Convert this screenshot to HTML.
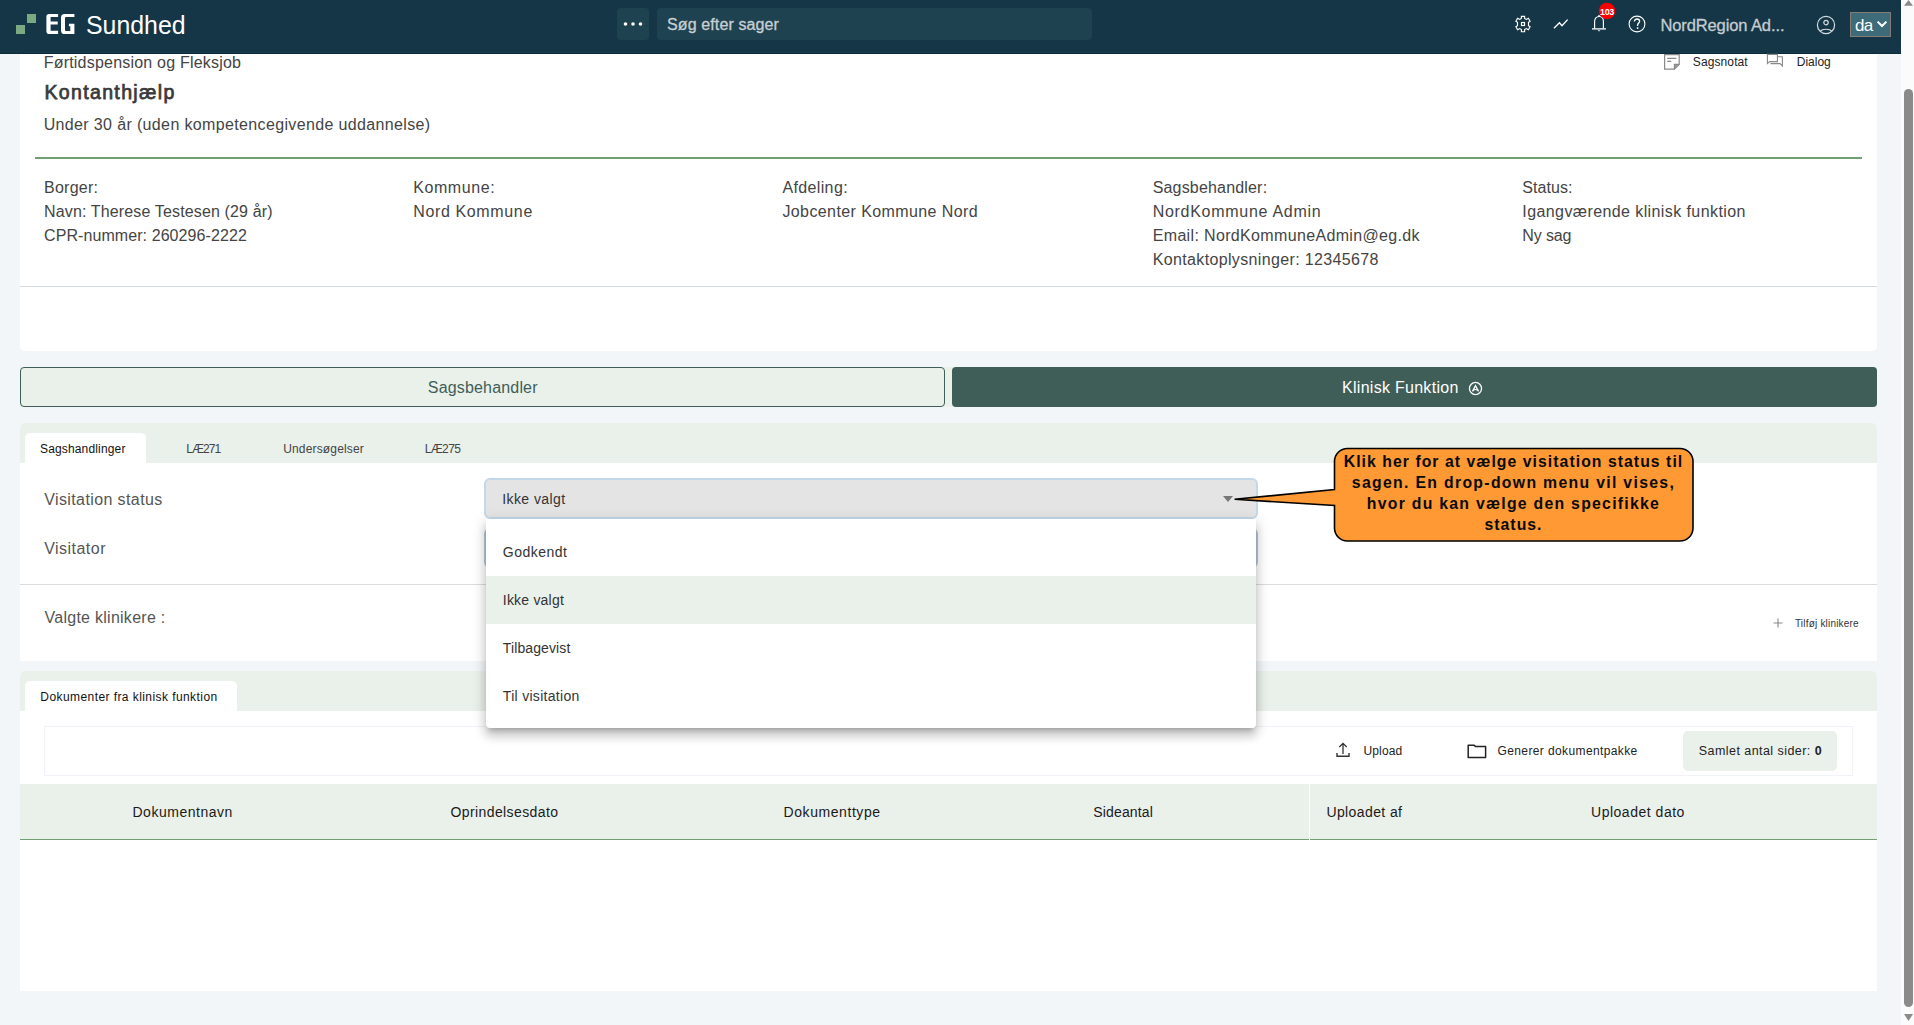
<!DOCTYPE html>
<html lang="da">
<head>
<meta charset="utf-8">
<title>EG Sundhed</title>
<style>
html,body{margin:0;padding:0;}
body{width:1914px;height:1025px;overflow:hidden;position:relative;background:#f2f6f9;font-family:"Liberation Sans",sans-serif;}
.a{position:absolute;box-sizing:border-box;}
.t{position:absolute;white-space:pre;line-height:1;font-family:"Liberation Sans",sans-serif;}
svg{position:absolute;overflow:visible;}
</style>
</head>
<body>
<!-- page cards -->
<div class="a" style="left:20px;top:0;width:1857px;height:351px;background:#fff;border-radius:0 0 5px 5px;"></div>
<div class="a" style="left:35px;top:157px;width:1827px;height:2px;background:#6f9f72;"></div>
<div class="a" style="left:20px;top:286px;width:1857px;height:1px;background:#d5dadf;"></div>

<!-- buttons -->
<div class="a" style="left:20px;top:367px;width:1857px;height:40px;background:#eaf0ea;"></div>
<div class="a" style="left:20px;top:367px;width:925px;height:40px;border:1px solid #3f5e58;border-radius:4px;background:#eaf0ea;"></div>
<div class="a" style="left:952px;top:367px;width:925px;height:40px;border-radius:4px;background:#3f5e58;"></div>
<svg style="left:1468px;top:381px" width="15" height="15" viewBox="0 0 15 15"><circle cx="7.5" cy="7.5" r="6.05" fill="none" stroke="#fff" stroke-width="1.3"/><path d="M4.5 10.4 L7.5 4.6 L10.5 10.4" fill="none" stroke="#fff" stroke-width="1.3"/><path d="M5.3 9.3 Q7.5 7.7 9.7 9.3" fill="none" stroke="#fff" stroke-width="1.2"/></svg>

<!-- panel 1 -->
<div class="a" style="left:20px;top:423px;width:1857px;height:238px;background:#fff;border-radius:5px 5px 0 0;overflow:hidden;">
  <div class="a" style="left:0;top:0;width:1857px;height:40px;background:#eaf0ea;"></div>
  <div class="a" style="left:5px;top:10px;width:121px;height:30px;background:#fff;border-radius:5px 5px 0 0;"></div>
</div>
<!-- select -->
<div class="a" style="left:484px;top:478px;width:774px;height:41px;background:#e4e4e4;border:2px solid #c4d8e8;border-radius:6px;"></div>
<svg style="left:1223px;top:496px" width="10" height="6" viewBox="0 0 10 6"><path d="M0 0 H10 L5 6 Z" fill="#777"/></svg>
<div class="a" style="left:484px;top:528px;width:774px;height:40px;background:#fff;border:2px solid #b4c9da;border-radius:6px;"></div>
<div class="a" style="left:20px;top:584px;width:1857px;height:1px;background:#dcdcdc;"></div>
<svg style="left:1773px;top:618px" width="10" height="10" viewBox="0 0 10 10"><path d="M5 0.5 V9.5 M0.5 5 H9.5" stroke="#888" stroke-width="1.1" fill="none"/></svg>

<!-- panel 2 -->
<div class="a" style="left:20px;top:671px;width:1857px;height:320px;background:#fff;border-radius:5px 5px 0 0;overflow:hidden;">
  <div class="a" style="left:0;top:0;width:1857px;height:40px;background:#eaf0ea;"></div>
  <div class="a" style="left:5px;top:10px;width:212px;height:30px;background:#fff;border-radius:5px 5px 0 0;"></div>
</div>
<div class="a" style="left:44px;top:726px;width:1809px;height:50px;border:1px solid #f0f2f7;"></div>
<div class="a" style="left:1683px;top:731px;width:154px;height:40px;background:#eaf0ea;border-radius:5px;"></div>
<svg style="left:1336px;top:742px" width="14" height="16" viewBox="0 0 14 16"><path d="M7 1.5 V12 M3.3 5 L7 1.3 L10.7 5" stroke="#333" stroke-width="1.3" fill="none"/><path d="M1 11 V14.2 H13 V11" stroke="#333" stroke-width="1.4" fill="none"/></svg>
<svg style="left:1467px;top:743px" width="20" height="16" viewBox="0 0 20 16"><path d="M1.2 2.2 H7.2 L8.6 3.6 H18.6 V14.6 H1.2 Z" stroke="#222" stroke-width="1.5" fill="none" stroke-linejoin="round"/></svg>
<div class="a" style="left:20px;top:784px;width:1857px;height:56px;background:#eaf0ea;border-bottom:1px solid #6f9f72;"></div>
<div class="a" style="left:1309px;top:784px;width:1.4px;height:56px;background:#fff;"></div>

<!-- header -->
<div class="a" style="left:0;top:0;width:1901px;height:54px;background:#143647;border-bottom:1px solid #0d2c3a;"></div>
<div class="a" style="left:16px;top:25px;width:9px;height:9px;background:#7aa982;"></div>
<div class="a" style="left:27px;top:14px;width:9px;height:9px;background:#7aa982;"></div>
<svg style="left:0;top:0" width="100" height="40" viewBox="0 0 100 40"><path fill="#fff" d="M49.2 13.9 H58.1 V17.1 H50.6 V21.5 H57.7 V24.5 H50.6 V30.8 H58.1 V34 H49.2 Q46.4 34 46.4 31.2 V16.7 Q46.4 13.9 49.2 13.9 Z"/><path fill="#fff" d="M64.6 13.9 H74.4 V16.9 H66 Q65 16.9 65 17.9 V30 Q65 31 66 31 H70.3 V26.3 H68.9 V23.7 H74.4 V34 H64.6 Q61 34 61 30.4 V17.5 Q61 13.9 64.6 13.9 Z"/></svg>
<div class="a" style="left:617px;top:8px;width:32px;height:32px;background:#1f4250;border-radius:4px;"></div>
<svg style="left:617px;top:8px" width="32" height="32" viewBox="0 0 32 32"><circle cx="8.5" cy="16" r="1.8" fill="#fff"/><circle cx="16" cy="16" r="1.8" fill="#fff"/><circle cx="23.5" cy="16" r="1.8" fill="#fff"/></svg>
<div class="a" style="left:657px;top:8px;width:435px;height:32px;background:#1f4250;border-radius:4px;"></div>
<!-- gear -->
<svg style="left:1514px;top:15px" width="18" height="18" viewBox="0 0 18 18"><path d="M7.4 1.3 H10.6 V3.4 L12.3 4.4 L14.4 3.2 L16.1 6.2 L14.5 7.3 V10.7 L16.1 11.8 L14.4 14.8 L12.3 13.6 L10.6 14.6 V16.7 H7.4 V14.6 L5.7 13.6 L3.6 14.8 L1.9 11.8 L3.5 10.7 V7.3 L1.9 6.2 L3.6 3.2 L5.7 4.4 L7.4 3.4 Z" fill="none" stroke="#fff" stroke-width="1.15" stroke-linejoin="miter"/><rect x="7.5" y="7.5" width="3" height="3" fill="none" stroke="#fff" stroke-width="1.2"/></svg>
<!-- trend -->
<svg style="left:1552px;top:17px" width="18" height="14" viewBox="0 0 18 14"><path d="M2 11.2 L7.4 5.8 L10 8.8 L15.6 2.6" fill="none" stroke="#fff" stroke-width="1.35" stroke-linejoin="miter"/></svg>
<!-- bell -->
<svg style="left:1590px;top:14px" width="18" height="20" viewBox="0 0 18 20"><path d="M4.6 14.4 V7.4 C4.6 4.4 6.5 2.5 9 2.5 C11.5 2.5 13.4 4.4 13.4 7.4 V14.4" fill="none" stroke="#fff" stroke-width="1.15"/><path d="M2 14.9 H16" stroke="#fff" stroke-width="1.3"/><circle cx="9" cy="1.9" r="0.9" fill="#fff"/><path d="M7.6 16.2 H10.4 L9 17.6 Z" fill="#fff"/></svg>
<svg style="left:1598px;top:2px" width="18" height="18" viewBox="0 0 18 18"><circle cx="9" cy="9" r="8.2" fill="#f00"/></svg>
<div class="t" style="left:1598px;top:7.6px;width:18px;text-align:center;font-size:9px;font-weight:700;color:#fff;letter-spacing:-0.3px;">103</div>
<!-- help -->
<svg style="left:1627px;top:14px" width="20" height="20" viewBox="0 0 20 20"><circle cx="10" cy="10" r="7.9" fill="none" stroke="#fff" stroke-width="1.1"/><path d="M7.4 7.6 C7.4 5.9 8.6 5 10 5 C11.5 5 12.6 6 12.6 7.3 C12.6 8.9 10.6 9.2 10.6 11.3 V12" fill="none" stroke="#fff" stroke-width="1.3"/><rect x="9.8" y="13.3" width="1.6" height="1.6" fill="#fff"/></svg>
<!-- user -->
<svg style="left:1816px;top:15px" width="20" height="20" viewBox="0 0 20 20"><circle cx="10" cy="10" r="8.6" fill="none" stroke="#d5dcdf" stroke-width="1.2"/><circle cx="10" cy="7.6" r="2.2" fill="none" stroke="#d5dcdf" stroke-width="1.2"/><path d="M4.4 16.2 C6.2 13.6 13.8 13.6 15.6 16.2" fill="none" stroke="#d5dcdf" stroke-width="1.2"/></svg>
<!-- lang -->
<div class="a" style="left:1850px;top:12px;width:41px;height:25px;background:#3d6b7a;border:1px solid #857c77;"></div>
<svg style="left:1876px;top:20px" width="12" height="8" viewBox="0 0 12 8"><path d="M1.6 1.6 L6 6 L10.4 1.6" fill="none" stroke="#fff" stroke-width="2"/></svg>

<!-- sagsnotat / dialog icons -->
<svg style="left:1663px;top:53px" width="18" height="18" viewBox="0 0 18 18"><path d="M1.6 1.6 H16.2 V11.4 L11.4 16.2 H1.6 Z" fill="none" stroke="#888" stroke-width="1.2"/><path d="M11.4 16.2 V11.4 H16.2" fill="#999" stroke="#888" stroke-width="1.2"/><path d="M4.2 5.3 H13.4 M4.2 8.4 H8.2" stroke="#888" stroke-width="1.2"/></svg>
<svg style="left:1766px;top:53px" width="18" height="18" viewBox="0 0 18 18"><path d="M1.4 1.4 H11.4 V8.6 H3.6 L1.4 10.6 Z" fill="none" stroke="#888" stroke-width="1.1"/><path d="M4.4 10.6 H14 L16.4 13 V3.8 H11.4" fill="none" stroke="#888" stroke-width="1.1"/></svg>

<!-- scrollbar -->
<div class="a" style="left:1901px;top:0;width:13px;height:1025px;background:#fbfbfb;"></div>
<svg style="left:1901px;top:0" width="13" height="1025" viewBox="0 0 13 1025"><path d="M3 5.8 L7.5 0 L12 5.8 Z" fill="#8a8a8a"/><rect x="3" y="89" width="9" height="918" rx="4.5" fill="#8a8a8a"/><path d="M3 1014 H12 L7.5 1021 Z" fill="#8a8a8a"/></svg>

<!-- dropdown panel -->
<div class="a" style="left:486px;top:519px;width:770px;height:209px;background:#fff;border-radius:0 0 4px 4px;box-shadow:0 5px 5px -3px rgba(0,0,0,.2),0 8px 10px 1px rgba(0,0,0,.14),0 3px 14px 2px rgba(0,0,0,.12);"></div>
<div class="a" style="left:486px;top:576px;width:770px;height:48px;background:#eaf0ea;"></div>

<!-- callout -->
<svg style="left:0;top:0" width="1914" height="1025" viewBox="0 0 1914 1025"><path d="M1347.5 448.5 H1680 A13 13 0 0 1 1693 461.5 V528 A13 13 0 0 1 1680 541 H1347.5 A13 13 0 0 1 1334.5 528 V505.5 L1234.6 499.3 L1334.5 489.5 V461.5 A13 13 0 0 1 1347.5 448.5 Z" fill="#ff9933" stroke="#000" stroke-width="1.6" stroke-linejoin="miter"/></svg>

<div id='t0' class='t' style='left:86.00px;top:11.89px;font-size:26px;font-weight:400;color:#fff;letter-spacing:0.000px;transform:scaleX(0.9567);transform-origin:0 0;'><span>Sundhed</span></div>
<div id='t1' class='t' style='left:667.10px;top:16.66px;font-size:16px;font-weight:400;color:#c8d0d4;letter-spacing:0.108px;-webkit-text-stroke:0.3px #c8d0d4;'><span>Søg efter sager</span></div>
<div id='t2' class='t' style='left:1660.40px;top:16.83px;font-size:16.5px;font-weight:400;color:#c5cdd1;letter-spacing:-0.105px;-webkit-text-stroke:0.3px #c5cdd1;'><span>NordRegion Ad...</span></div>
<div id='t3' class='t' style='left:1855.10px;top:16.51px;font-size:17px;font-weight:400;color:#fff;letter-spacing:-0.922px;'><span>da</span></div>
<div id='t4' class='t' style='left:43.70px;top:54.66px;font-size:16px;font-weight:400;color:#444;letter-spacing:0.208px;'><span>Førtidspension og Fleksjob</span></div>
<div id='t5' class='t' style='left:44.40px;top:83.39px;font-size:19.5px;font-weight:400;color:#3a3a3a;letter-spacing:1.362px;-webkit-text-stroke:0.75px #3a3a3a;'><span>Kontanthjælp</span></div>
<div id='t6' class='t' style='left:43.70px;top:117.36px;font-size:16px;font-weight:400;color:#444;letter-spacing:0.358px;'><span>Under 30 år (uden kompetencegivende uddannelse)</span></div>
<div id='t7' class='t' style='left:1692.80px;top:55.74px;font-size:12px;font-weight:400;color:#222;letter-spacing:0.107px;'><span>Sagsnotat</span></div>
<div id='t8' class='t' style='left:1796.80px;top:55.74px;font-size:12px;font-weight:400;color:#222;letter-spacing:-0.006px;'><span>Dialog</span></div>
<div id='t9' class='t' style='left:44.00px;top:180.16px;font-size:16px;font-weight:400;color:#444;letter-spacing:0.255px;'><span>Borger:</span></div>
<div id='t10' class='t' style='left:44.00px;top:204.16px;font-size:16px;font-weight:400;color:#444;letter-spacing:0.144px;'><span>Navn: Therese Testesen (29 år)</span></div>
<div id='t11' class='t' style='left:44.00px;top:228.16px;font-size:16px;font-weight:400;color:#444;letter-spacing:0.082px;'><span>CPR-nummer: 260296-2222</span></div>
<div id='t12' class='t' style='left:413.20px;top:180.16px;font-size:16px;font-weight:400;color:#444;letter-spacing:0.589px;'><span>Kommune:</span></div>
<div id='t13' class='t' style='left:413.20px;top:204.16px;font-size:16px;font-weight:400;color:#444;letter-spacing:0.641px;'><span>Nord Kommune</span></div>
<div id='t14' class='t' style='left:782.40px;top:180.16px;font-size:16px;font-weight:400;color:#444;letter-spacing:0.367px;'><span>Afdeling:</span></div>
<div id='t15' class='t' style='left:782.40px;top:204.16px;font-size:16px;font-weight:400;color:#444;letter-spacing:0.406px;'><span>Jobcenter Kommune Nord</span></div>
<div id='t16' class='t' style='left:1152.70px;top:180.16px;font-size:16px;font-weight:400;color:#444;letter-spacing:0.177px;'><span>Sagsbehandler:</span></div>
<div id='t17' class='t' style='left:1152.70px;top:204.16px;font-size:16px;font-weight:400;color:#444;letter-spacing:0.712px;'><span>NordKommune Admin</span></div>
<div id='t18' class='t' style='left:1152.70px;top:228.16px;font-size:16px;font-weight:400;color:#444;letter-spacing:0.345px;'><span>Email: NordKommuneAdmin@eg.dk</span></div>
<div id='t19' class='t' style='left:1152.70px;top:252.16px;font-size:16px;font-weight:400;color:#444;letter-spacing:0.357px;'><span>Kontaktoplysninger: 12345678</span></div>
<div id='t20' class='t' style='left:1522.30px;top:180.16px;font-size:16px;font-weight:400;color:#444;letter-spacing:0.048px;'><span>Status:</span></div>
<div id='t21' class='t' style='left:1522.30px;top:204.16px;font-size:16px;font-weight:400;color:#444;letter-spacing:0.408px;'><span>Igangværende klinisk funktion</span></div>
<div id='t22' class='t' style='left:1522.30px;top:228.16px;font-size:16px;font-weight:400;color:#444;letter-spacing:-0.139px;'><span>Ny sag</span></div>
<div id='t23' class='t' style='left:427.80px;top:380.16px;font-size:16px;font-weight:400;color:#3f5e58;letter-spacing:0.172px;'><span>Sagsbehandler</span></div>
<div id='t24' class='t' style='left:1342.00px;top:380.36px;font-size:16px;font-weight:400;color:#fff;letter-spacing:0.284px;'><span>Klinisk Funktion</span></div>
<div id='t25' class='t' style='left:40.00px;top:443.44px;font-size:12px;font-weight:400;color:#111;letter-spacing:0.153px;'><span>Sagshandlinger</span></div>
<div id='t26' class='t' style='left:186.20px;top:443.44px;font-size:12px;font-weight:400;color:#444;letter-spacing:-0.901px;'><span>LÆ271</span></div>
<div id='t27' class='t' style='left:283.20px;top:443.44px;font-size:12px;font-weight:400;color:#444;letter-spacing:0.158px;'><span>Undersøgelser</span></div>
<div id='t28' class='t' style='left:424.70px;top:443.44px;font-size:12px;font-weight:400;color:#444;letter-spacing:-0.626px;'><span>LÆ275</span></div>
<div id='t29' class='t' style='left:44.20px;top:491.56px;font-size:16px;font-weight:400;color:#555;letter-spacing:0.396px;'><span>Visitation status</span></div>
<div id='t30' class='t' style='left:44.20px;top:541.16px;font-size:16px;font-weight:400;color:#555;letter-spacing:0.473px;'><span>Visitator</span></div>
<div id='t31' class='t' style='left:502.20px;top:492.35px;font-size:14px;font-weight:400;color:#333;letter-spacing:0.429px;'><span>Ikke valgt</span></div>
<div id='t32' class='t' style='left:44.50px;top:610.36px;font-size:16px;font-weight:400;color:#555;letter-spacing:0.265px;'><span>Valgte klinikere :</span></div>
<div id='t33' class='t' style='left:1794.90px;top:619.43px;font-size:10px;font-weight:400;color:#333;letter-spacing:0.203px;'><span>Tilføj klinikere</span></div>
<div id='t34' class='t' style='left:40.30px;top:690.84px;font-size:12px;font-weight:400;color:#111;letter-spacing:0.427px;'><span>Dokumenter fra klinisk funktion</span></div>
<div id='t35' class='t' style='left:1363.40px;top:745.04px;font-size:12px;font-weight:400;color:#222;letter-spacing:0.174px;'><span>Upload</span></div>
<div id='t36' class='t' style='left:1497.50px;top:745.04px;font-size:12px;font-weight:400;color:#222;letter-spacing:0.386px;'><span>Generer dokumentpakke</span></div>
<div id='t37' class='t' style='left:1698.80px;top:744.52px;font-size:12.5px;font-weight:400;color:#222;letter-spacing:0.442px;'><span>Samlet antal sider: <b style="font-weight:700">0</b></span></div>
<div id='t38' class='t' style='left:132.50px;top:805.05px;font-size:14px;font-weight:400;color:#1a1a1a;letter-spacing:0.512px;'><span>Dokumentnavn</span></div>
<div id='t39' class='t' style='left:450.50px;top:805.05px;font-size:14px;font-weight:400;color:#1a1a1a;letter-spacing:0.396px;'><span>Oprindelsesdato</span></div>
<div id='t40' class='t' style='left:783.60px;top:805.05px;font-size:14px;font-weight:400;color:#1a1a1a;letter-spacing:0.565px;'><span>Dokumenttype</span></div>
<div id='t41' class='t' style='left:1093.30px;top:805.05px;font-size:14px;font-weight:400;color:#1a1a1a;letter-spacing:0.151px;'><span>Sideantal</span></div>
<div id='t42' class='t' style='left:1326.40px;top:805.05px;font-size:14px;font-weight:400;color:#1a1a1a;letter-spacing:0.399px;'><span>Uploadet af</span></div>
<div id='t43' class='t' style='left:1591.00px;top:805.05px;font-size:14px;font-weight:400;color:#1a1a1a;letter-spacing:0.518px;'><span>Uploadet dato</span></div>
<div id='t44' class='t' style='left:502.80px;top:545.05px;font-size:14px;font-weight:400;color:#333;letter-spacing:0.469px;'><span>Godkendt</span></div>
<div id='t45' class='t' style='left:502.80px;top:593.05px;font-size:14px;font-weight:400;color:#333;letter-spacing:0.207px;'><span>Ikke valgt</span></div>
<div id='t46' class='t' style='left:502.80px;top:641.05px;font-size:14px;font-weight:400;color:#333;letter-spacing:0.109px;'><span>Tilbagevist</span></div>
<div id='t47' class='t' style='left:502.80px;top:689.05px;font-size:14px;font-weight:400;color:#333;letter-spacing:0.298px;'><span>Til visitation</span></div>
<div id='t48' class='t' style='left:1113.50px;width:800px;text-align:center;top:454.23px;font-size:15.8px;font-weight:700;color:#0a0a0a;letter-spacing:1.037px;'><span>Klik her for at vælge visitation status til</span></div>
<div id='t49' class='t' style='left:1113.50px;width:800px;text-align:center;top:475.13px;font-size:15.8px;font-weight:700;color:#0a0a0a;letter-spacing:1.312px;'><span>sagen. En drop-down menu vil vises,</span></div>
<div id='t50' class='t' style='left:1113.50px;width:800px;text-align:center;top:496.03px;font-size:15.8px;font-weight:700;color:#0a0a0a;letter-spacing:1.263px;'><span>hvor du kan vælge den specifikke</span></div>
<div id='t51' class='t' style='left:1113.50px;width:800px;text-align:center;top:516.93px;font-size:15.8px;font-weight:700;color:#0a0a0a;letter-spacing:1.013px;'><span>status.</span></div>
</body>
</html>
